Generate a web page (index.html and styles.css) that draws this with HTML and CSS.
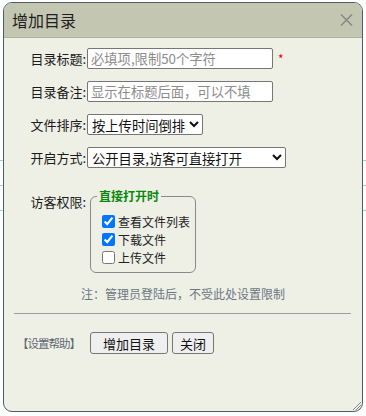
FILE: index.html
```html
<!DOCTYPE html>
<html lang="zh-CN">
<head>
    <meta charset="UTF-8">
    <title>增加目录</title>
    <link rel="stylesheet" href="styles.css">
</head>
<body>
    <div class="dialog">
        <div class="dialog-title">
            <span>增加目录</span>
            <svg class="close" width="13" height="12" viewBox="0 0 13 12">
                <path d="M1 0.5 L12 11.5 M12 0.5 L1 11.5" stroke="#8a8a8a" stroke-width="1.6" fill="none"/>
            </svg>
        </div>
        <div class="dialog-body">
            <div class="form-row">
                <label>目录标题:</label>
                <input type="text" class="text" placeholder="必填项,限制50个字符">
                <span class="req">*</span>
            </div>
            <div class="form-row">
                <label>目录备注:</label>
                <input type="text" class="text" placeholder="显示在标题后面，可以不填">
            </div>
            <div class="form-row">
                <label>文件排序:</label>
                <select class="sort">
                    <option>按上传时间倒排</option>
                    <option>按上传时间正排</option>
                    <option>按文件名排序</option>
                </select>
            </div>
            <div class="form-row">
                <label>开启方式:</label>
                <select class="open">
                    <option>公开目录,访客可直接打开</option>
                    <option>加密目录,需输入密码</option>
                    <option>隐藏目录</option>
                </select>
            </div>
            <div class="form-row perm">
                <label>访客权限:</label>
                <fieldset>
                    <legend>直接打开时</legend>
                    <label class="check"><input type="checkbox" checked>查看文件列表</label>
                    <label class="check"><input type="checkbox" checked>下载文件</label>
                    <label class="check"><input type="checkbox">上传文件</label>
                </fieldset>
            </div>
            <p class="note">注：管理员登陆后，不受此处设置限制</p>
            <hr>
            <div class="actions">
                <a class="help">【设置帮助】</a>
                <button class="btn-main">增加目录</button>
                <button>关闭</button>
            </div>
        </div>
        <svg class="grip" width="12" height="12" viewBox="0 0 12 12">
            <path d="M11 3 L3 11 M11 6 L6 11 M11 9 L9 11" stroke="#7d8a96" stroke-width="1" fill="none"/>
        </svg>
    </div>
</body>
</html>
```

FILE: styles.css
```css
body {
    margin: 0;
    font-family: "Noto Sans CJK SC", "Liberation Sans", sans-serif;
    color: #222;
    background: #fff repeating-linear-gradient(to bottom, #97dcb8 0 1px, transparent 1px 25px) 0 160px / 100% 51px no-repeat;
}
.dialog {
    position: relative;
    width: 358px;
    height: 408px;
    margin: 2px 0 0 3px;
    border: 1px solid #4e5d6c;
    border-radius: 9px;
    background: #eef0e6;
    overflow: hidden;
}
.dialog-title {
    height: 34px;
    padding: 0 9px 0 8px;
    display: flex;
    align-items: center;
    justify-content: space-between;
    background: #c3c6b1;
    border-bottom: 1px solid #aeb19d;
    font-size: 16px;
    color: #1e1e1e;
}
.dialog-body {
    padding-top: 10px;
}
.form-row {
    display: flex;
    align-items: center;
    height: 21px;
    margin-bottom: 12px;
    font-size: 13px;
}
.form-row > label {
    width: 82px;
    text-align: right;
    padding-right: 1px;
    color: #1a1a1a;
}
.text {
    box-sizing: border-box;
    width: 186px;
    height: 21px;
    padding: 0 3px;
    border: 1px solid #767676;
    border-radius: 2px;
    font-family: inherit;
    font-size: 13.3px;
    background: #fff;
}
.text::placeholder {
    color: #8c8c8c;
}
.req {
    margin-left: 5px;
    color: #e00;
    font-size: 12px;
}
select {
    box-sizing: border-box;
    height: 21px;
    padding: 0;
    border: 1px solid #767676;
    border-radius: 2px;
    font-family: inherit;
    font-size: 13.3px;
    color: #111;
    background: #fff;
}
.sort {
    width: 116px;
}
.open {
    width: 199px;
}
.form-row.perm {
    height: auto;
    align-items: flex-start;
    margin-top: 21px;
    margin-bottom: 0;
}
.form-row.perm > label {
    padding-top: 3px;
}
fieldset {
    margin: 0 0 0 3px;
    padding: 9px 5px 6px 11px;
    border: 1px solid #8a8a8a;
    border-radius: 6px;
}
legend {
    margin-left: -5px;
    padding: 0 2px;
    font-size: 12px;
    font-weight: bold;
    line-height: 14px;
    color: #0a870a;
}
.check {
    display: flex;
    align-items: center;
    height: 18px;
    font-size: 12px;
    white-space: nowrap;
}
.check input {
    width: 13px;
    height: 13px;
    margin: 0 3px 0 0;
}
.note {
    margin: 13px 0 0;
    text-align: center;
    font-size: 12px;
    line-height: 16px;
    color: #6b7682;
}
hr {
    margin: 11px 11px 0 10px;
    border: none;
    border-top: 1px solid #9d9f98;
}
.actions {
    display: flex;
    align-items: center;
    gap: 4px;
    padding: 18px 0 0 13px;
}
.help {
    margin-right: 6px;
    font-size: 11.5px;
    letter-spacing: -1px;
    color: #5f6670;
    cursor: pointer;
}
button {
    height: 22px;
    padding: 0 7px;
    border: 1px solid #767676;
    border-radius: 3px;
    background: #efefef;
    font-family: inherit;
    font-size: 13px;
    color: #111;
}
.btn-main {
    padding: 0 12px;
}
.close {
    display: block;
}
.grip {
    position: absolute;
    right: 0;
    bottom: 0;
}
```
